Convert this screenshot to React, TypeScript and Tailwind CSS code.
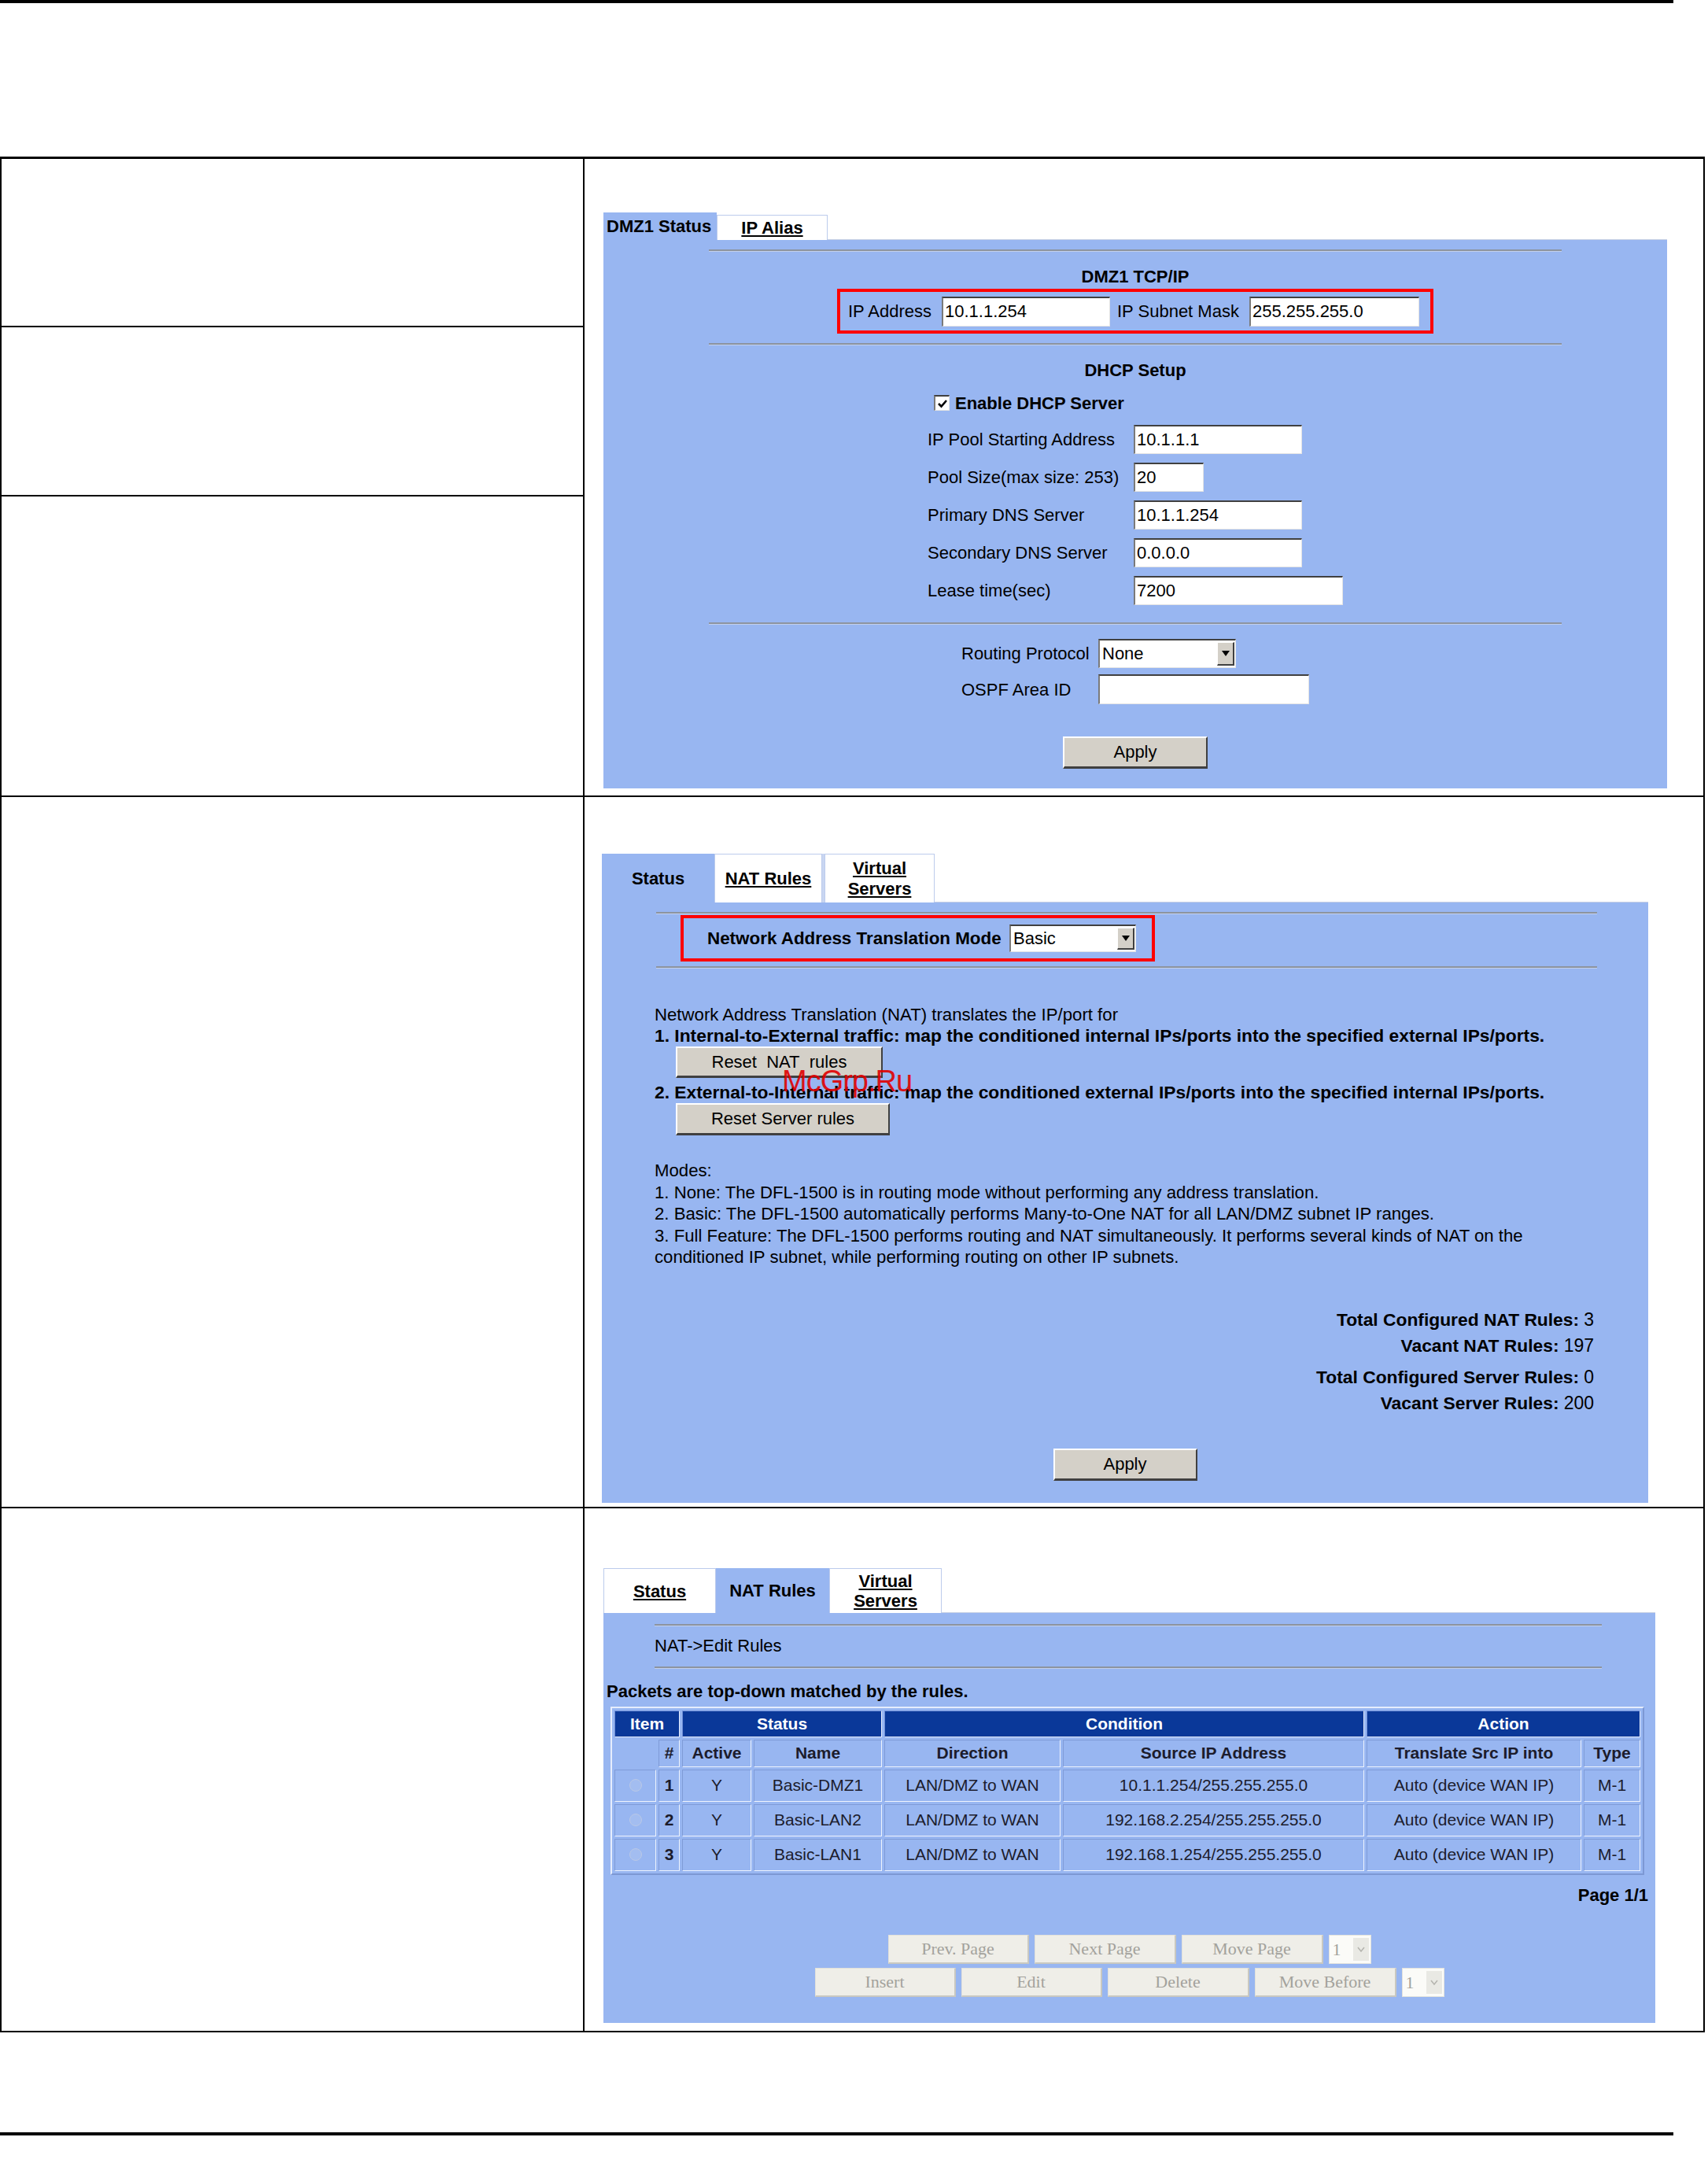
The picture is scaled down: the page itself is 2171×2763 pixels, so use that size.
import React from "react";

// inset text field, windows classic look
function Field({ value, className }: { value?: string; className: string }) {
  return (
    <div
      className={`bg-white border-t-2 border-l-2 border-b border-r border-t-[#404040] border-l-[#7a7a7a] border-b-[#e4e4e4] border-r-[#e4e4e4] flex items-center pl-[2px] text-[22px] leading-none ${className}`}
    >
      {value}
    </div>
  );
}

function DropDown({ value, className }: { value: string; className: string }) {
  return (
    <div
      className={`bg-white border-t-2 border-l-2 border-b border-r border-t-[#404040] border-l-[#7a7a7a] border-b-[#e4e4e4] border-r-[#e4e4e4] flex items-stretch text-[22px] leading-none ${className}`}
    >
      <div className="flex-1 flex items-center pl-[3px]">{value}</div>
      <div className="w-[22px] my-[2px] mr-[1px] bg-[#d4d0c8] border-t border-l border-white border-b-2 border-r-2 border-b-[#404040] border-r-[#404040] flex items-center justify-center">
        <svg width="10" height="7" viewBox="0 0 10 7">
          <polygon points="0,0 10,0 5,7" fill="#000" />
        </svg>
      </div>
    </div>
  );
}

function Btn({ children, className }: { children: React.ReactNode; className: string }) {
  return (
    <div
      className={`bg-[#d4d0c8] border-t-2 border-l-2 border-t-white border-l-white border-b-[3px] border-r-2 border-b-[#404040] border-r-[#404040] flex items-center justify-center text-[22px] leading-none ${className}`}
    >
      {children}
    </div>
  );
}

function DisBtn({ children, className }: { children: React.ReactNode; className: string }) {
  return (
    <div
      className={`h-[37px] bg-[#efeee8] border border-[#e2e1da] border-b-2 border-r-2 border-b-[#c9c8c0] border-r-[#c9c8c0] flex items-center justify-center font-['Liberation_Serif',serif] text-[22px] text-[#a3a29c] ${className}`}
    >
      {children}
    </div>
  );
}

function DisSelect() {
  return (
    <div className="w-[54px] h-[37px] bg-[#fbfbf8] border border-[#e3e3dd] flex items-stretch font-['Liberation_Serif',serif] text-[22px] text-[#a3a29c]">
      <div className="flex-1 flex items-center pl-[4px]">1</div>
      <div className="w-[20px] my-[3px] mr-[2px] bg-[#e9e9e4] flex items-center justify-center">
        <svg width="10" height="7" viewBox="0 0 10 7">
          <polyline points="1,1 5,6 9,1" fill="none" stroke="#b4b4ae" strokeWidth="1.5" />
        </svg>
      </div>
    </div>
  );
}

function Rule({ className }: { className: string }) {
  return <div className={`h-[3px] bg-[#8d949f] border-b border-[#c2d0ee] ${className}`} />;
}

function Panel1() {
  const rows = [
    { label: "IP Pool Starting Address", value: "10.1.1.1", w: "w-[214px]" },
    { label: "Pool Size(max size: 253)", value: "20", w: "w-[89px]" },
    { label: "Primary DNS Server", value: "10.1.1.254", w: "w-[214px]" },
    { label: "Secondary DNS Server", value: "0.0.0.0", w: "w-[214px]" },
    { label: "Lease time(sec)", value: "7200", w: "w-[266px]" },
  ];
  return (
    <div className="ml-[24px] mt-[68px] w-[1352px] flex flex-col text-[22px]">
      <div className="flex h-[35px]">
        <div className="w-[144px] bg-[#98b6f1] pl-[4px] flex items-center font-bold">DMZ1 Status</div>
        <div className="w-[141px] mt-[3px] bg-white border border-b-0 border-[#bccbec] flex items-center justify-center font-bold underline">
          IP Alias
        </div>
        <div className="flex-1 border-b border-[#c6d0e4]" />
      </div>
      <div className="h-[697px] bg-[#98b6f1] flex flex-col items-center">
        <Rule className="mt-[12px] w-[1084px]" />
        <div className="mt-[19px] h-[26px] leading-[26px] font-bold">DMZ1 TCP/IP</div>
        <div className="mt-[2px] w-[758px] h-[57px] border-4 border-[#ff0000] flex items-center">
          <span className="w-[129px] pl-[10px]">IP Address</span>
          <Field value="10.1.1.254" className="w-[214px] h-[38px]" />
          <span className="w-[177px] pl-[9px]">IP Subnet Mask</span>
          <Field value="255.255.255.0" className="w-[216px] h-[38px]" />
        </div>
        <Rule className="mt-[12px] w-[1084px]" />
        <div className="mt-[19px] h-[26px] leading-[26px] font-bold">DHCP Setup</div>
        <div className="mt-[6px] w-[528px] flex flex-col">
          <div className="h-[44px] flex items-center pl-[8px] font-bold">
            <div className="w-[20px] h-[20px] bg-white border-t-2 border-l-2 border-t-[#404040] border-l-[#7a7a7a] border-b border-r border-[#e4e4e4] flex items-center justify-center">
              <svg width="14" height="12" viewBox="0 0 14 12">
                <path d="M2 6 L5.5 9.5 L12 2" fill="none" stroke="#000" strokeWidth="2.6" />
              </svg>
            </div>
            <span className="ml-[7px]">Enable DHCP Server</span>
          </div>
          {rows.map((r) => (
            <div key={r.label} className="h-[48px] flex items-center">
              <span className="w-[262px]">{r.label}</span>
              <Field value={r.value} className={`${r.w} h-[37px]`} />
            </div>
          ))}
        </div>
        <Rule className="mt-[17px] w-[1084px]" />
        <div className="mt-[13px] w-[442px] flex flex-col">
          <div className="h-[46px] flex items-center">
            <span className="w-[174px]">Routing Protocol</span>
            <DropDown value="None" className="w-[175px] h-[37px]" />
          </div>
          <div className="h-[46px] flex items-center">
            <span className="w-[174px]">OSPF Area ID</span>
            <Field className="w-[268px] h-[38px]" />
          </div>
        </div>
        <Btn className="mt-[37px] w-[184px] h-[41px]">Apply</Btn>
      </div>
    </div>
  );
}

function Panel2() {
  return (
    <div className="relative ml-[22px] mt-[72px] w-[1330px] flex flex-col text-[22px]">
      <div className="flex h-[62px]">
        <div className="w-[143px] bg-[#98b6f1] flex items-center justify-center font-bold">Status</div>
        <div className="w-[137px] bg-white border border-b-0 border-[#bccbec] flex items-center justify-center font-bold underline">
          NAT Rules
        </div>
        <div className="w-[3px] bg-[#c9d6f2]" />
        <div className="w-[140px] bg-white border border-b-0 border-[#bccbec] flex flex-col items-center justify-center font-bold underline leading-[26px]">
          <span>Virtual</span>
          <span>Servers</span>
        </div>
        <div className="flex-1 border-b border-[#c6d0e4]" />
      </div>
      <div className="h-[763px] bg-[#98b6f1] flex flex-col items-start">
        <Rule className="mt-[12px] ml-[69px] w-[1196px]" />
        <div className="mt-[1px] ml-[100px] w-[603px] h-[59px] border-4 border-[#ff0000] flex items-center">
          <span className="w-[414px] pl-[30px] font-bold text-[22.4px]">Network Address Translation Mode</span>
          <DropDown value="Basic" className="w-[161px] h-[35px]" />
        </div>
        <Rule className="mt-[6px] ml-[69px] w-[1196px]" />
        <div className="mt-[45px] ml-[67px] flex flex-col leading-[27px] text-[22.2px]">
          <div>Network Address Translation (NAT) translates the IP/port for</div>
          <div className="font-bold text-[22.8px]">
            1. Internal-to-External traffic: map the conditioned internal IPs/ports into the specified external IPs/ports.
          </div>
          <Btn className="ml-[27px] w-[263px] h-[40px]">Reset&nbsp; NAT&nbsp; rules</Btn>
          <div className="mt-[5px] font-bold text-[22.8px]">
            2. External-to-Internal traffic: map the conditioned external IPs/ports into the specified internal IPs/ports.
          </div>
          <Btn className="ml-[27px] w-[272px] h-[41px]">Reset Server rules</Btn>
          <div className="mt-[31px] leading-[27.5px]">
            <div>Modes:</div>
            <div>1. None: The DFL-1500 is in routing mode without performing any address translation.</div>
            <div>2. Basic: The DFL-1500 automatically performs Many-to-One NAT for all LAN/DMZ subnet IP ranges.</div>
            <div>
              3. Full Feature: The DFL-1500 performs routing and NAT simultaneously. It performs several kinds of NAT on the
            </div>
            <div>conditioned IP subnet, while performing routing on other IP subnets.</div>
          </div>
        </div>
        <div className="self-end mr-[69px] mt-[49px] flex flex-col items-end leading-[32px]">
          <div>
            <b className="text-[22.8px]">Total Configured NAT Rules:</b> <span className="text-[23px]">3</span>
          </div>
          <div>
            <b className="text-[22.8px]">Vacant NAT Rules:</b> <span className="text-[23px]">197</span>
          </div>
          <div className="mt-[7px]">
            <b className="text-[22.8px]">Total Configured Server Rules:</b> <span className="text-[23px]">0</span>
          </div>
          <div>
            <b className="text-[22.8px]">Vacant Server Rules:</b> <span className="text-[23px]">200</span>
          </div>
        </div>
        <Btn className="self-center mt-[41px] w-[183px] h-[41px]">Apply</Btn>
      </div>
      <div className="absolute left-[229px] top-[270px] text-[38px] tracking-[-1px] text-[#e00000]/90 leading-none">McGrp.Ru</div>
    </div>
  );
}

const th = "bg-[#0a3899] text-white font-bold h-[30px] border border-t-[#6f8fd8] border-l-[#6f8fd8] border-b-[#e6edfc] border-r-[#e6edfc]";
const td = "border border-t-[#7f9bd7] border-l-[#7f9bd7] border-b-[#eef3fd] border-r-[#eef3fd] text-center";

function Panel3() {
  const rules = [
    { n: "1", name: "Basic-DMZ1", src: "10.1.1.254/255.255.255.0" },
    { n: "2", name: "Basic-LAN2", src: "192.168.2.254/255.255.255.0" },
    { n: "3", name: "Basic-LAN1", src: "192.168.1.254/255.255.255.0" },
  ];
  return (
    <div className="ml-[24px] mt-[76px] w-[1337px] flex flex-col text-[22px]">
      <div className="flex h-[57px]">
        <div className="w-[143px] bg-white border border-b-0 border-[#bccbec] flex items-center justify-center font-bold underline">
          Status
        </div>
        <div className="w-[144px] bg-[#98b6f1] flex items-center justify-center font-bold">NAT Rules</div>
        <div className="w-[143px] bg-white border border-b-0 border-[#bccbec] flex flex-col items-center justify-center font-bold underline leading-[25px]">
          <span>Virtual</span>
          <span>Servers</span>
        </div>
        <div className="flex-1 border-b border-[#c6d0e4]" />
      </div>
      <div className="h-[521px] bg-[#98b6f1] flex flex-col items-start">
        <Rule className="mt-[14px] ml-[65px] w-[1204px]" />
        <div className="mt-[12px] ml-[65px] leading-[26px]">{"NAT->Edit Rules"}</div>
        <Rule className="mt-[13px] ml-[65px] w-[1204px]" />
        <div className="mt-[16px] ml-[4px] leading-[26px] font-bold">Packets are top-down matched by the rules.</div>
        <table className="mt-[6px] ml-[9px] w-[1314px] table-fixed border-separate border-spacing-[3px] border-2 border-t-[#e6edfc] border-l-[#e6edfc] border-b-[#7d98d4] border-r-[#7d98d4] text-[21px] text-[#1c1c2c]">
          <colgroup>
            <col className="w-[53px]" />
            <col className="w-[27px]" />
            <col className="w-[88px]" />
            <col className="w-[163px]" />
            <col className="w-[224px]" />
            <col />
            <col className="w-[273px]" />
            <col className="w-[72px]" />
          </colgroup>
          <thead>
            <tr>
              <th colSpan={2} className={th}>Item</th>
              <th colSpan={2} className={th}>Status</th>
              <th colSpan={2} className={th}>Condition</th>
              <th colSpan={2} className={th}>Action</th>
            </tr>
            <tr className="h-[35px] font-bold">
              <td className="border-0" />
              <td className={td}>#</td>
              <td className={td}>Active</td>
              <td className={td}>Name</td>
              <td className={td}>Direction</td>
              <td className={td}>Source IP Address</td>
              <td className={td}>Translate Src IP into</td>
              <td className={td}>Type</td>
            </tr>
          </thead>
          <tbody>
            {rules.map((r) => (
              <tr key={r.n} className="h-[41px]">
                <td className={td}>
                  <div className="mx-auto w-[16px] h-[16px] rounded-full border border-[#b9c8e6] bg-[#a3bdf0]" />
                </td>
                <td className={`${td} font-bold`}>{r.n}</td>
                <td className={td}>Y</td>
                <td className={td}>{r.name}</td>
                <td className={td}>LAN/DMZ to WAN</td>
                <td className={td}>{r.src}</td>
                <td className={td}>Auto (device WAN IP)</td>
                <td className={td}>M-1</td>
              </tr>
            ))}
          </tbody>
        </table>
        <div className="self-end mr-[9px] mt-[13px] leading-[26px] font-bold">Page 1/1</div>
        <div className="self-center mt-[37px] flex gap-[7px]">
          <DisBtn className="w-[179px]">Prev. Page</DisBtn>
          <DisBtn className="w-[180px]">Next Page</DisBtn>
          <DisBtn className="w-[180px]">Move Page</DisBtn>
          <DisSelect />
        </div>
        <div className="self-center mt-[5px] flex gap-[7px]">
          <DisBtn className="w-[179px]">Insert</DisBtn>
          <DisBtn className="w-[179px]">Edit</DisBtn>
          <DisBtn className="w-[180px]">Delete</DisBtn>
          <DisBtn className="w-[180px]">Move Before</DisBtn>
          <DisSelect />
        </div>
      </div>
    </div>
  );
}

export default function App() {
  return (
    <div className="w-[2171px] h-[2763px] bg-white text-black font-['Liberation_Sans',Arial,sans-serif] flex flex-col">
      <div className="h-[4px] w-[2127px] bg-black shrink-0" />
      <div className="h-[195px] shrink-0" />
      <div className="w-[2167px] h-[2384px] border-2 border-t-[3px] border-black flex flex-col shrink-0">
        <div className="flex h-[811px] border-b-2 border-black">
          <div className="w-[741px] border-r-2 border-black flex flex-col">
            <div className="h-[214px] border-b-2 border-black" />
            <div className="h-[215px] border-b-2 border-black" />
            <div className="flex-1" />
          </div>
          <div className="flex-1">
            <Panel1 />
          </div>
        </div>
        <div className="flex h-[904px] border-b-2 border-black">
          <div className="w-[741px] border-r-2 border-black" />
          <div className="flex-1">
            <Panel2 />
          </div>
        </div>
        <div className="flex flex-1">
          <div className="w-[741px] border-r-2 border-black" />
          <div className="flex-1">
            <Panel3 />
          </div>
        </div>
      </div>
      <div className="h-[127px] shrink-0" />
      <div className="h-[4px] w-[2127px] bg-black shrink-0" />
    </div>
  );
}
